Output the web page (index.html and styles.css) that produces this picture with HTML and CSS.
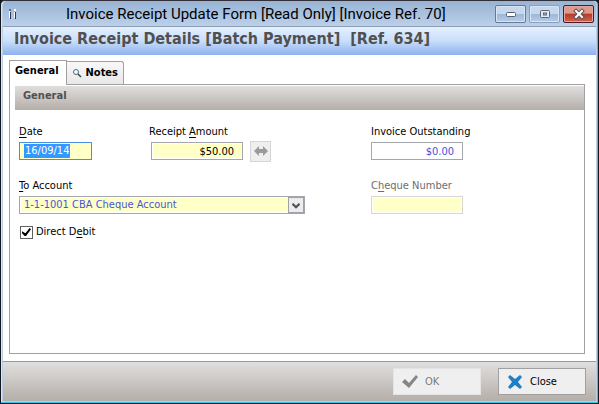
FILE: index.html
```html
<!DOCTYPE html>
<html lang="en">
<head>
<meta charset="UTF-8" />
<meta name="viewport" content="width=device-width, initial-scale=1" />
<title>Invoice Receipt Update Form</title>
<link rel="stylesheet" href="styles.css">
</head>
<body>

<div class="window">
  <header class="titlebar">
    <svg class="app-icon" width="10" height="12" viewBox="0 0 10 12">
      <path d="M1 1h2v2H1z" fill="#5a6f9c"/>
      <path d="M2 4h1v7H2z" fill="#26365c"/>
      <path d="M1 3h1v7H1z" fill="#fff"/>
      <path d="M6 1h2v2H6z" fill="#fff"/>
      <path d="M6 4h1v6H6z" fill="#fff"/>
      <path d="M7 4h1v7H7z" fill="#26365c"/>
    </svg>
    <span class="title">Invoice Receipt Update Form [Read Only] [Invoice Ref. 70]</span>
    <div class="window-buttons">
      <button class="win-btn" aria-label="Minimize">
        <svg width="12" height="6" viewBox="0 0 12 6"><rect x="1.500" y="1.500" width="9" height="4" rx="1" fill="#fff" stroke="#565d6b"/></svg>
      </button>
      <button class="win-btn maximize" aria-label="Maximize">
        <svg width="12" height="10" viewBox="0 0 12 10"><rect x="1.500" y="1.500" width="9" height="7" rx="1" fill="#e4ebf4" stroke="#5c6474"/><rect x="4.500" y="4" width="3" height="2" fill="#9fb8d8" stroke="#5c6474"/></svg>
      </button>
      <button class="win-btn close" aria-label="Close window">
        <svg width="14" height="12" viewBox="0 0 14 12"><path d="M4 3l6 6M10 3l-6 6" stroke="#555260" stroke-width="4" stroke-linecap="square"/><path d="M4 3l6 6M10 3l-6 6" stroke="#fff" stroke-width="2" stroke-linecap="square"/></svg>
      </button>
    </div>
  </header>

  <h1 class="heading">Invoice Receipt Details [Batch Payment]&nbsp; [Ref. 634]</h1>

  <main class="content">
    <div class="tabs" role="tablist">
      <button class="tab active" role="tab" aria-selected="true">General</button>
      <button class="tab" role="tab" aria-selected="false">
        <svg width="10" height="10" viewBox="0 0 10 10"><circle cx="4" cy="4" r="2.500" fill="#f4fafa" stroke="#4c6c74"/><path d="M6 6l3 3" stroke="#2d4c54" stroke-width="1.500"/></svg>
        Notes
      </button>
    </div>

    <section class="panel">
      <h2 class="panel-title">General</h2>
      <form class="fields" id="receipt-form">
        <div class="field">
          <label for="date"><u>D</u>ate</label>
          <div class="date-box">
            <input type="text" id="date" value="16/09/14" readonly>
          </div>
        </div>
        <div class="field">
          <label for="amount">Receipt <u>A</u>mount</label>
          <div class="amount-row">
            <input class="money" type="text" id="amount" value="$50.00" readonly>
            <button class="swap" type="button" aria-label="Allocate">
              <svg width="16" height="12" viewBox="0 0 16 12"><path d="M1 6l5-5v3h4V1l5 5-5 5V8H6v3z" fill="#9b9b9b"/></svg>
            </button>
          </div>
        </div>
        <div class="field">
          <label for="outstanding">Invoice Outstanding</label>
          <input class="money outstanding" type="text" id="outstanding" value="$0.00" readonly>
        </div>
        <div class="field wide">
          <label for="account"><u>T</u>o Account</label>
          <div class="select-box">
            <select id="account">
              <option>1-1-1001 CBA Cheque Account</option>
            </select>
            <svg class="arrow" width="16" height="16" viewBox="0 0 16 16"><path d="M4 6.500L8 10.500l4-4" fill="none" stroke="#505050" stroke-width="2.500"/></svg>
          </div>
        </div>
        <div class="field disabled">
          <label for="cheque">C<u>h</u>eque Number</label>
          <input class="cheque" type="text" id="cheque" disabled>
        </div>
      </form>
      <div class="check-row">
        <input type="checkbox" id="direct" checked>
        <label for="direct">Direct D<u>e</u>bit</label>
      </div>
    </section>
  </main>

  <footer class="footer">
    <button class="action" disabled>
      <svg width="18" height="16" viewBox="0 0 18 16"><path d="M1 8l3-3 4 4 7-8 2 2-9 11z" fill="#858585"/></svg>
      OK
    </button>
    <button class="action">
      <svg width="18" height="16" viewBox="0 0 18 16"><path d="M2 3l2-2 5 4 5-4 2 2-4 5 4 5-2 2-5-4-5 4-2-2 4-5z" fill="#1f7fc6"/></svg>
      Close
    </button>
  </footer>
</div>

</body>
</html>
```
FILE: styles.css
```css
* {
  box-sizing: border-box;
}
body {
  margin: 0;
  background: #15171c;
  color: #000;
  font: 11px/16px "DejaVu Sans Condensed", Tahoma, "DejaVu Sans", sans-serif;
}
button, input, select {
  font: inherit;
  color: inherit;
  margin: 0;
  border-radius: 0;
}
u {
  text-underline-offset: 2px;
}
.window {
  display: flex;
  flex-direction: column;
  min-height: 100vh;
  border: 1px solid #15171c;
  border-top-color: #332f38;
  border-radius: 5px 5px 0 0;
  background: #b8cfea;
  padding: 0 2px 2px;
  box-shadow: inset -1px -1px #35c5ea, inset 1px 1px #d9e6f5;
}

/* title bar */
.titlebar {
  display: flex;
  align-items: center;
  height: 26px;
  padding: 0 2px 0 5px;
  background: linear-gradient(#98b3d3, #bbd0ea);
  border-bottom: 1px solid #8d9cae;
  border-radius: 4px 4px 0 0;
}
.title {
  flex: 1;
  padding-left: 48px;
  font: 15px/20px Roboto, "Segoe UI", sans-serif;
  white-space: nowrap;
}
.window-buttons {
  display: flex;
  gap: 3px;
}
.win-btn {
  display: flex;
  align-items: center;
  justify-content: center;
  width: 31px;
  height: 18px;
  padding: 0;
  border: 1px solid #64789a;
  border-radius: 2px;
  background: linear-gradient(#c5d8ee 50%, #9db7d6 50%, #b5cde8);
  box-shadow: inset 0 0 0 1px #d7e5f5;
}
.maximize {
  border-color: #8ba0be;
}
.close {
  border-color: #4f1a20;
  background: linear-gradient(#dd9a8c 45%, #b93a25 50%, #cc6550);
  box-shadow: inset 0 0 0 1px #e2a59b;
}

.heading {
  margin: 0;
  height: 28px;
  padding: 0 11px;
  background: linear-gradient(#e4f0ff, #c8defb 50%, #8db2ee);
  color: #505050;
  font-size: 16px;
  font-weight: bold;
  line-height: 24px;
}

/* tabs and panel */
.content {
  flex: 1;
  display: flex;
  flex-direction: column;
  padding: 5px 11px 7px 6px;
  background: #fff;
}
.tabs {
  display: flex;
  align-items: flex-end;
}
.tab {
  display: flex;
  align-items: center;
  gap: 4px;
  height: 23px;
  padding: 0 5px;
  border: 1px solid #a0a0a0;
  border-width: 1px 1px 0 0;
  border-radius: 0 3px 0 0;
  background: linear-gradient(#f8f8f8, #e8e8e8);
  font-weight: bold;
}
.tab.active {
  position: relative;
  height: 25px;
  margin-bottom: -1px;
  padding: 0 7px 4px 5px;
  border-left-width: 1px;
  border-radius: 0;
  background: #fff;
}
.panel {
  flex: 1;
  border: 1px solid #a0a0a0;
  padding: 1px 0 0 5px;
}
.panel-title {
  margin: 0;
  height: 24px;
  padding: 0 8px;
  background: linear-gradient(#e0dfde, #b5aea9);
  color: #505050;
  font-size: 11px;
  line-height: 20px;
}
.fields {
  display: grid;
  grid-template-columns: 130px 222px 1fr;
  row-gap: 18px;
  padding: 14px 4px 0;
}
.field label {
  display: block;
  height: 18px;
}
.field input,
.select-box {
  display: block;
  width: 92px;
  height: 18px;
  padding: 0 8px;
  border: 1px solid #a5a5ad;
  background: #ffffc8;
  box-shadow: inset 0 0 0 1px #fff;
}
.field .money {
  text-align: right;
}
.field .outstanding {
  background: #fff;
  color: #3f51e0;
}
.date-box {
  display: flex;
  width: 73px;
  height: 18px;
  padding: 1px 4px;
  border: 1px solid #4a90dc;
  background: #ffffc8;
}
.date-box input {
  width: 46px;
  height: 14px;
  padding: 0 0 0 1px;
  border: 0;
  border-right: 1px solid #d07a20;
  background: #3399ff;
  box-shadow: none;
  color: #fff;
}
.amount-row {
  display: flex;
  align-items: center;
  gap: 7px;
  height: 18px;
  padding-left: 2px;
}
.swap {
  display: flex;
  align-items: center;
  justify-content: center;
  width: 21px;
  height: 21px;
  padding: 0;
  border: 1px solid #d5d5d5;
  background: #efefef;
}
.wide {
  grid-column: span 2;
}
.select-box {
  display: flex;
  width: 286px;
  padding: 0;
}
.select-box select {
  flex: 1;
  appearance: none;
  padding: 0 4px;
  border: 0;
  background: none;
  color: #4656d8;
}
.arrow {
  border: 1px solid #a0a0a8;
  background: #ececec;
  pointer-events: none;
}
.field.disabled {
  color: #6d6d6d;
}
.field .cheque {
  border-color: #d5d5da;
}
.check-row {
  display: flex;
  align-items: center;
  gap: 3px;
  padding: 10px 5px;
}
.check-row input {
  appearance: none;
  display: grid;
  place-items: center;
  width: 13px;
  height: 13px;
  border: 1px solid #606060;
  background: #fff;
}
.check-row input:checked::before {
  content: "";
  width: 9px;
  height: 8px;
  background: #000;
  clip-path: polygon(0 40%, 38% 65%, 85% 0, 100% 15%, 45% 100%, 30% 100%, 0 65%);
}

/* bottom buttons */
.footer {
  display: flex;
  justify-content: flex-end;
  gap: 17px;
  padding: 6px 10px 6px 0;
  border-top: 1px solid #999;
  background: linear-gradient(#e0dfde, #b5aea9);
}
.action {
  display: flex;
  align-items: center;
  gap: 6px;
  width: 88px;
  height: 27px;
  padding: 0 7px;
  border: 1px solid #a0a0a0;
  background: #efefef;
}
.action:disabled {
  border-color: #e4e4e4;
  color: #7c7c7c;
}
```
